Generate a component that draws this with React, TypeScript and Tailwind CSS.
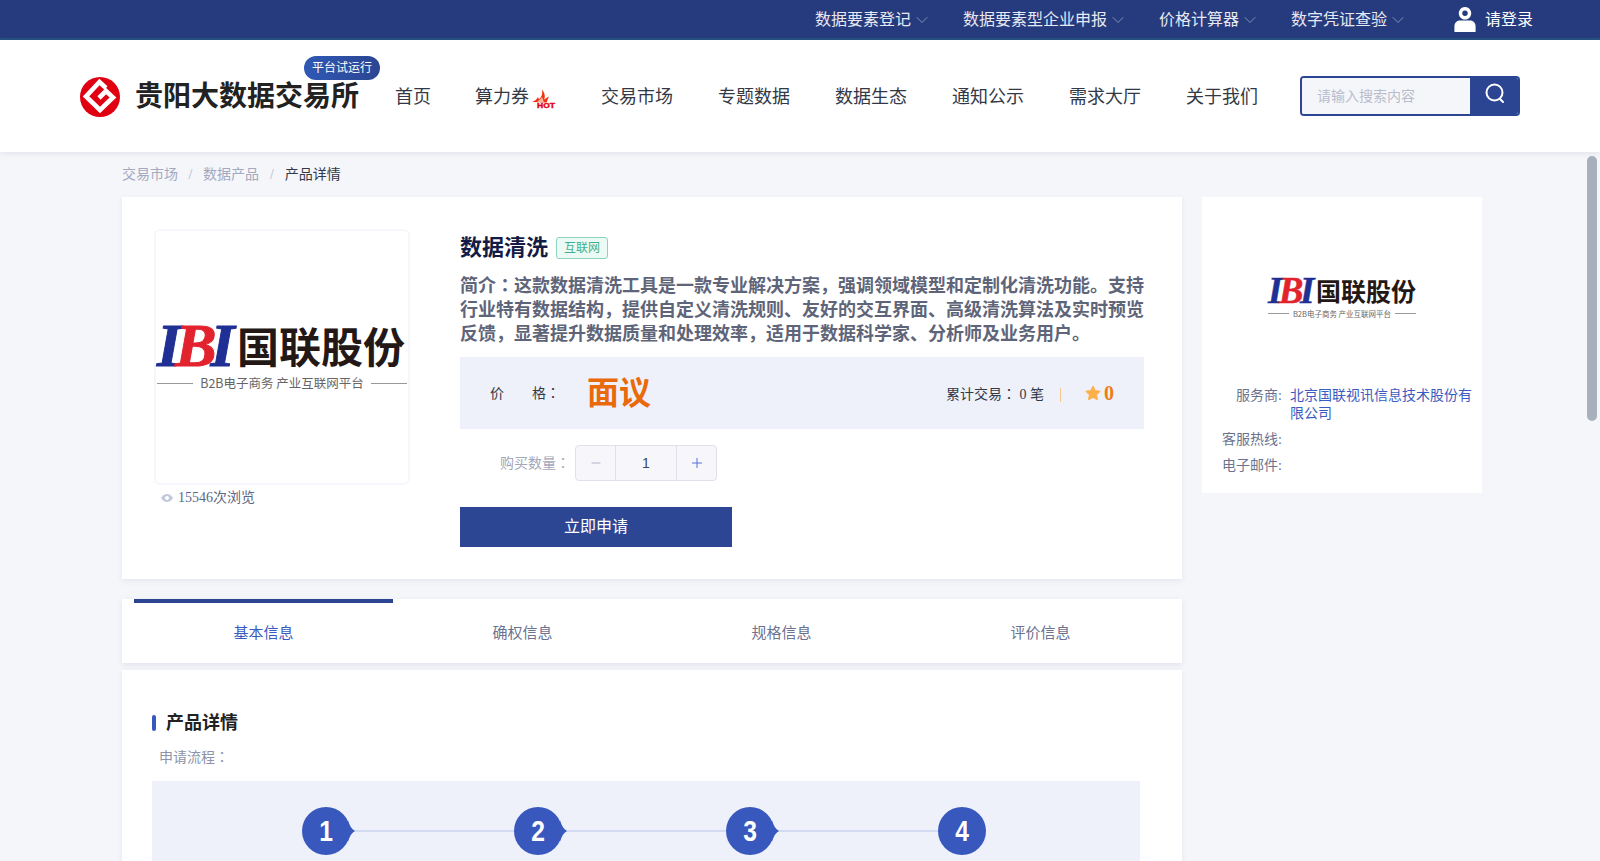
import React from 'react';
import { ChevronDown, Minus, Plus } from 'lucide-react';

const cjk = '"Liberation Serif","Noto Sans CJK SC",serif';

const topMenus = ['数据要素登记', '数据要素型企业申报', '价格计算器', '数字凭证查验'];
const navItems = ['交易市场', '专题数据', '数据生态', '通知公示', '需求大厅', '关于我们'];
const tabs = ['基本信息', '确权信息', '规格信息', '评价信息'];

// 冒号在参考图里是居中的，SC 字形靠左
const Colon = () => <span style={{ fontFamily: '"Liberation Serif","Noto Sans CJK TC",serif' }}>：</span>;

const BrandMark = () => (
  <svg viewBox="0 0 40 40" className="w-[40px] h-[40px] shrink-0 mt-[1px]">
    <circle cx="20" cy="20" r="20" fill="#e00012" />
    <path
      d="M26 11 L19.5 5 L6 19.5 L20 33 L33 20.5 L26 14 L19 21"
      fill="none"
      stroke="#fff"
      strokeWidth="4.6"
      strokeLinejoin="miter"
    />
  </svg>
);

const HotIcon = () => (
  <svg viewBox="0 0 24 20" className="w-[24px] h-[20px] ml-[3px] mt-[4px]">
    <path d="M0 13 C3 12 5 10 6 8 L7 10.5 C9 8 11 6 10 0.5 C13 4 13.5 8 12 10.5 L17 7.5 L14.5 13.5 Z" fill="#f0320f" />
    <path d="M5 13 C7 11 9 10 10 8 C11 10 11 11 12 13 Z" fill="#ffb199" />
    <text x="5" y="18.5" fontSize="7.5" fontWeight="700" textLength="18" lengthAdjust="spacingAndGlyphs" fill="#e60012" stroke="#e60012" strokeWidth="0.4" fontFamily="Liberation Sans, sans-serif">HOT</text>
  </svg>
);

const UserIcon = () => (
  <svg viewBox="0 0 22 26" className="w-[22px] h-[25px]">
    <path d="M11 0 a6.5 6.5 0 1 0 0.01 0 Z M11 3.6 a2.9 2.9 0 1 1 -0.01 0 Z" fill="#fff" fillRule="evenodd" />
    <path d="M0 26 V20 C0 16 3 14 6 14 H16 C19 14 22 16 22 20 V26 Z" fill="#fff" />
  </svg>
);

const IbiLogo = ({ big }: { big?: boolean }) => (
  <div className={big ? 'w-[250px]' : 'w-[148px]'}>
    <div className={big ? 'flex items-center gap-[7px] h-[42px] whitespace-nowrap' : 'flex items-center gap-[4px] h-[25px] whitespace-nowrap'}>
      <span
        className={
          big
            ? 'block w-[73px] shrink-0 font-bold italic text-[62px] leading-[42px] tracking-[-6px] text-[#1f2f93] [-webkit-text-stroke:1px_currentColor]'
            : 'block w-[44px] shrink-0 font-bold italic text-[37px] leading-[25px] tracking-[-3.6px] text-[#1f2f93] [-webkit-text-stroke:0.5px_currentColor]'
        }
        style={{ fontFamily: '"Liberation Serif",serif' }}
      >
        I<span className="text-[#e2232e]">B</span>I
      </span>
      <span
        className={
          big
            ? 'font-bold text-[42px] leading-[42px] text-[#231815]'
            : 'font-bold text-[25px] leading-[25px] text-[#231815]'
        }
        style={{ fontFamily: '"Noto Sans CJK SC",sans-serif' }}
      >
        国联股份
      </span>
    </div>
    <div className={big ? 'flex items-center gap-[7px] mt-[10px]' : 'flex items-center gap-[4px] mt-[6px]'}>
      <div className="flex-1 h-px bg-[#999]" />
      <span
        className={
          big
            ? 'whitespace-nowrap text-[12.5px] leading-[14px] text-[#666]'
            : 'whitespace-nowrap text-[7.5px] leading-[9px] text-[#666]'
        }
        style={{ fontFamily: '"Noto Sans CJK SC",sans-serif' }}
      >
        B2B电子商务 产业互联网平台
      </span>
      <div className="flex-1 h-px bg-[#999]" />
    </div>
  </div>
);

const Step = ({ n, last }: { n: number; last?: boolean }) => (
  <div className={last ? 'flex items-center w-[48px]' : 'flex items-center w-[212px]'}>
    <div className="relative w-[48px] h-[48px] rounded-full bg-[#3858bd] flex items-center justify-center shrink-0">
      <span
        className="text-white text-[29px] font-bold leading-none scale-x-[0.85]"
        style={{ fontFamily: '"Liberation Sans",sans-serif' }}
      >
        {n}
      </span>
      {!last && (
        <svg viewBox="0 0 8 24" className="absolute left-[46px] top-[12px] w-[7px] h-[24px]">
          <path d="M0 0 C2 6 4 10 8 12 C4 14 2 18 0 24 Z" fill="#3858bd" />
        </svg>
      )}
    </div>
    {!last && <div className="flex-1 h-[2px] bg-[#d3dbf3]" />}
  </div>
);

export default function App() {
  return (
    <div className="relative h-[861px] overflow-hidden bg-[#f5f6fa]" style={{ fontFamily: cjk }}>
      {/* 顶部栏 */}
      <div className="h-[40px] bg-[#263b7d] border-b-2 border-[#25527f] flex justify-end items-center pr-[67px] text-[16px] text-[#e6e9f2]">
        {topMenus.map((m) => (
          <div key={m} className="flex items-center mr-[31px] pt-[1px]">
            <span>{m}</span>
            <ChevronDown className="w-[20px] h-[20px] ml-[1px] text-[#93a1c6]" strokeWidth={1} />
          </div>
        ))}
        <div className="flex items-center ml-[15px]">
          <UserIcon />
          <span className="ml-[9px] text-white pt-[1px]">请登录</span>
        </div>
      </div>

      {/* 主导航 */}
      <div className="relative h-[112px] bg-white shadow-[0_1px_6px_rgba(60,70,110,0.12)] flex items-center pl-[80px]">
        <BrandMark />
        <div className="relative ml-[15px] mt-[2px]">
          <span className="text-[28px] font-bold text-[#222] leading-[40px]">贵阳大数据交易所</span>
          <span className="absolute left-[169px] top-[-21px] w-[76px] h-[24px] rounded-[12px] bg-gradient-to-r from-[#2f59b5] to-[#2b4592] text-white text-[12px] leading-[24px] text-center">
            平台试运行
          </span>
        </div>
        <div className="flex items-center ml-[36px] mt-[2px] text-[18px] text-[#333846]">
          <span>首页</span>
          <div className="flex items-center ml-[44px] mr-[45px]">
            <span>算力券</span>
            <HotIcon />
          </div>
          <div className="flex gap-[45px]">
            {navItems.map((n) => (
              <span key={n}>{n}</span>
            ))}
          </div>
        </div>
        <div className="ml-[42px] flex w-[220px] h-[40px] rounded-[4px] border-2 border-[#2b4592] overflow-hidden">
          <div className="w-[168px] bg-[#f5f6fa] pl-[15px] text-[14px] leading-[38px] text-[#b8bccb]">请输入搜索内容</div>
          <div className="flex-1 bg-[#2b4592] flex items-center justify-center">
            <svg viewBox="0 0 22 22" className="w-[22px] h-[22px] ml-[2px] -mt-[6px]" fill="none" stroke="#fff" strokeWidth="2">
              <circle cx="10.5" cy="10.5" r="8" />
              <path d="M16 17 L19 20" strokeLinecap="round" />
            </svg>
          </div>
        </div>
      </div>

      {/* 面包屑 */}
      <div className="h-[45px] pl-[122px] flex items-center text-[14px] text-[#a3a9c0]">
        <span>交易市场</span>
        <span className="mx-[10.5px] text-[#b0b5c6]">/</span>
        <span>数据产品</span>
        <span className="mx-[11px] text-[#b0b5c6]">/</span>
        <span className="text-[#333846]">产品详情</span>
      </div>

      <div className="flex items-start gap-[20px] pl-[122px]">
        <div className="w-[1060px]">
          {/* 产品信息 */}
          <div className="h-[382px] bg-white shadow-[0_2px_6px_rgba(60,70,110,0.08)] flex pl-[32px] pt-[32px]">
            <div className="w-[256px]">
              <div className="w-[256px] h-[256px] rounded-[6px] border-2 border-[#f6f6fc] flex items-center justify-center">
                <IbiLogo big />
              </div>
              <div className="flex items-center mt-[3px] ml-[7px] text-[14px] leading-[20px] text-[#5e6785]">
                <svg viewBox="0 0 12 8" className="w-[12px] h-[8px] mr-[5px]">
                  <path d="M0 4 C2 0.5 4 0 6 0 C8 0 10 0.5 12 4 C10 7.5 8 8 6 8 C4 8 2 7.5 0 4 Z M6 2 a2 2 0 1 0 0.01 0 Z" fill="#c3c8da" fillRule="evenodd" />
                </svg>
                15546次浏览
              </div>
            </div>
            <div className="w-[684px] ml-[50px]">
              <div className="flex items-center h-[34px] mt-[1px]">
                <span className="text-[22px] font-bold text-[#141c45]">数据清洗</span>
                <span className="ml-[8px] mt-[1px] w-[52px] h-[22px] rounded-[3px] border border-[#8ed3bf] bg-[#ebfaf5] text-[12px] leading-[20px] text-center text-[#3fb08f]">
                  互联网
                </span>
              </div>
              <p className="mt-[10px] text-[18px] leading-[24px] font-bold text-[#5f6579]">
                简介<Colon />这款数据清洗工具是一款专业解决方案，强调领域模型和定制化清洗功能。支持行业特有数据结构，提供自定义清洗规则、友好的交互界面、高级清洗算法及实时预览反馈，显著提升数据质量和处理效率，适用于数据科学家、分析师及业务用户。
              </p>
              <div className="mt-[11px] h-[72px] bg-[#eef1fa] flex items-center pl-[30px] pr-[30px] text-[14px] text-[#333846]">
                <span className="w-[42px]">价</span>
                <span>格<Colon /></span>
                <span className="ml-[27px] text-[32px] font-bold text-[#e96a0a]">面议</span>
                <span className="ml-auto mt-[2px]">累计交易<Colon /> 0 笔</span>
                <span className="mx-[16px] mt-[4px] w-px h-[14px] bg-[#f5c78e]" />
                <svg viewBox="0 0 16 16" className="ml-[8px] w-[16px] h-[16px]">
                  <path d="M8 1 L10.2 5.6 L15.2 6.3 L11.6 9.8 L12.5 14.8 L8 12.4 L3.5 14.8 L4.4 9.8 L0.8 6.3 L5.8 5.6 Z" fill="#fdb04a" stroke="#fdb04a" strokeLinejoin="round" />
                </svg>
                <span className="ml-[3px] text-[20px] font-bold text-[#ed7d15] leading-none">0</span>
              </div>
              <div className="mt-[16px] flex items-center pl-[40px]">
                <span className="w-[75px] text-[14px] text-[#a3a8bb]">购买数量<Colon /></span>
                <div className="flex w-[142px] h-[36px] rounded-[4px] border border-[#dfe1ea] bg-[#f7f7fb] overflow-hidden">
                  <div className="w-[40px] flex items-center justify-center border-r border-[#dfe1ea]">
                    <Minus className="w-[14px] h-[14px] text-[#a3a8bb]" strokeWidth={1.5} />
                  </div>
                  <div className="flex-1 text-center leading-[34px] text-[14px] text-[#3c4563]" style={{ fontFamily: '"Liberation Sans",sans-serif' }}>
                    1
                  </div>
                  <div className="w-[40px] flex items-center justify-center border-l border-[#dfe1ea]">
                    <Plus className="w-[16px] h-[16px] text-[#5a6fe0]" strokeWidth={1.5} />
                  </div>
                </div>
              </div>
              <div className="mt-[26px] w-[272px] h-[40px] bg-[#2c4694] text-white text-[16px] leading-[40px] text-center">立即申请</div>
            </div>
          </div>

          {/* 标签页 */}
          <div className="mt-[20px] h-[64px] bg-white shadow-[0_2px_6px_rgba(60,70,110,0.1)] flex px-[12px]">
            {tabs.map((t, i) => (
              <div
                key={t}
                className={
                  i === 0
                    ? 'w-[259px] border-t-4 border-[#2b4592] text-center text-[15px] leading-[60px] text-[#3a5bc0]'
                    : 'w-[259px] border-t-4 border-transparent text-center text-[15px] leading-[60px] text-[#6b7390]'
                }
              >
                {t}
              </div>
            ))}
          </div>

          {/* 产品详情 */}
          <div className="mt-[7px] h-[300px] bg-white shadow-[0_2px_6px_rgba(60,70,110,0.08)] px-[30px] pt-[41px]">
            <div className="flex items-center h-[24px]">
              <span className="w-[4px] h-[16px] rounded-[2px] bg-[#3858bd]" />
              <span className="ml-[10px] text-[18px] font-bold text-[#222]">产品详情</span>
            </div>
            <div className="mt-[13px] ml-[7px] text-[14px] leading-[20px] text-[#8d93a8]">申请流程<Colon /></div>
            <div className="mt-[13px] w-[988px] h-[200px] bg-[#eef1fa] pt-[26px] pl-[150px] flex items-start">
              <Step n={1} />
              <Step n={2} />
              <Step n={3} />
              <Step n={4} last />
            </div>
          </div>
        </div>

        {/* 服务商 */}
        <div className="w-[280px] h-[296px] bg-white pt-[81px]">
          <div className="flex justify-center">
            <IbiLogo />
          </div>
          <div className="mt-[69px] text-[14px] leading-[18px]">
            <div className="flex">
              <span className="w-[80px] text-right text-[#6b7390]">服务商:</span>
              <span className="ml-[8px] w-[184px] text-[#3a5bc0]">北京国联视讯信息技术股份有限公司</span>
            </div>
            <div className="flex mt-[8px]">
              <span className="w-[80px] text-right text-[#6b7390]">客服热线:</span>
            </div>
            <div className="flex mt-[8px]">
              <span className="w-[80px] text-right text-[#6b7390]">电子邮件:</span>
            </div>
          </div>
        </div>
      </div>

      {/* 滚动条 */}
      <div className="absolute right-[3px] top-[156px] w-[10px] h-[265px] rounded-[5px] bg-[#a8b0bc]" />
    </div>
  );
}
